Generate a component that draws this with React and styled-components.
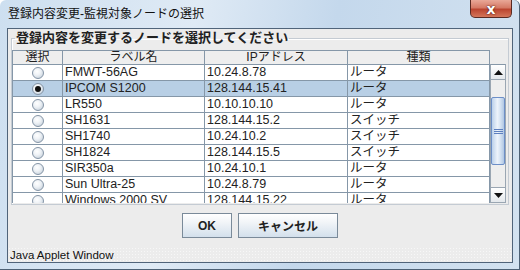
import React from "react";
import styled, { createGlobalStyle } from "styled-components";

const rows = [
  { label: "FMWT-56AG", ip: "10.24.8.78", kind: "ルータ" },
  { label: "IPCOM S1200", ip: "128.144.15.41", kind: "ルータ", selected: true },
  { label: "LR550", ip: "10.10.10.10", kind: "ルータ" },
  { label: "SH1631", ip: "128.144.15.2", kind: "スイッチ" },
  { label: "SH1740", ip: "10.24.10.2", kind: "スイッチ" },
  { label: "SH1824", ip: "128.144.15.5", kind: "スイッチ" },
  { label: "SIR350a", ip: "10.24.10.1", kind: "ルータ" },
  { label: "Sun Ultra-25", ip: "10.24.8.79", kind: "ルータ" },
  { label: "Windows 2000 SV", ip: "128.144.15.22", kind: "ルータ" },
];

const cols = "50px 142px 143px 142px";
const jp = `"Liberation Sans", "Noto Sans CJK JP", sans-serif`;

const Global = createGlobalStyle`
  body {
    margin: 0;
    background: #ffffff;
    font-family: ${jp};
  }
`;

const Window = styled.div`
  width: 520px;
  height: 270px;
  box-sizing: border-box;
  display: flex;
  flex-direction: column;
  padding: 0 6px 6px 7px;
  border-radius: 6px 6px 0 0;
  background: linear-gradient(100deg, #cddff0 0%, #dfeaf5 35%, #c4d8ec 60%, #d3e2f0 100%);
  border: 1px solid #4d6175;
  border-width: 0 1px 1px 0;
`;

const TitleBar = styled.div`
  height: 28px;
  display: flex;
  justify-content: space-between;
  align-items: flex-start;
  flex-shrink: 0;
`;

const Title = styled.div`
  font-size: 12px;
  line-height: 28px;
  color: #111;
  margin-left: 1px;
`;

const CloseButton = styled.div`
  width: 42px;
  height: 18px;
  margin-right: 1px;
  box-sizing: border-box;
  border: 1px solid #5a2a22;
  border-top: none;
  border-radius: 0 0 5px 5px;
  background: linear-gradient(180deg, #e9a898 0%, #d57a66 45%, #bb4530 55%, #d4765a 100%);
  display: flex;
  align-items: center;
  justify-content: center;
  color: #fff;
  font: bold 14px "DejaVu Sans", sans-serif;
  line-height: 14px;
  text-shadow: 0 0 2px #5a1a10, 0 0 1px #5a1a10;
`;

const Panel = styled.div`
  flex: 1;
  display: flex;
  flex-direction: column;
  background: #ececec;
  border: 1px solid #50647a;
`;

const GroupBox = styled.fieldset`
  margin: 1px 3px 0 3px;
  padding: 4px 1px 1px 0;
  border: 1px solid #c4cbd3;
  box-shadow: inset 1px 1px 0 #ffffff;
  min-width: 0;
`;

const Legend = styled.legend`
  font: bold 13px ${jp};
  line-height: 16px;
  padding: 0 1px;
  margin-left: 3px;
  color: #222;
`;

const ScrollPane = styled.div`
  display: flex;
  height: 153px;
`;

const TableArea = styled.div`
  display: flex;
  flex-direction: column;
  border-left: 1px solid #8597a8;
  overflow: hidden;
`;

const HeaderRow = styled.div`
  display: grid;
  grid-template-columns: ${cols};
  height: 15px;
  box-sizing: border-box;
  border-top: 1px solid #8597a8;
  border-bottom: 1px solid #8597a8;
  background: #eeeeee;
`;

const HeaderCell = styled.div`
  font-size: 12px;
  line-height: 13px;
  text-align: center;
  color: #222;
  border-right: 1px solid #8597a8;
`;

const Body = styled.div`
  flex: 1;
  overflow: hidden;
  background: #ffffff;
`;

const Row = styled.div`
  display: grid;
  grid-template-columns: ${cols};
  height: 16px;
  box-sizing: border-box;
  border-bottom: 1px solid #8597a8;
  background: ${(p) => (p.$selected ? "#b8cfe5" : "#ffffff")};
`;

const Cell = styled.div`
  font-size: 12.5px;
  line-height: 15px;
  padding-left: 2px;
  color: #222;
  white-space: nowrap;
  overflow: hidden;
  border-right: 1px solid #8597a8;
`;

const RadioCell = styled(Cell)`
  display: flex;
  align-items: center;
  justify-content: center;
  padding: 0;
`;

const Radio = styled.span`
  width: 12px;
  height: 12px;
  box-sizing: border-box;
  border-radius: 50%;
  border: 1px solid #8494a6;
  background: radial-gradient(circle at 40% 35%, #ffffff 0%, #eef2f6 40%, #bcc8d4 100%);
  display: flex;
  align-items: center;
  justify-content: center;

  &::after {
    content: "";
    width: 6px;
    height: 6px;
    border-radius: 50%;
    background: ${(p) => (p.$checked ? "#111" : "transparent")};
  }
`;

const ScrollColumn = styled.div`
  display: flex;
  flex-direction: column;
  width: 16px;
  padding-top: 14px;
`;

const ScrollBar = styled.div`
  flex: 1;
  display: flex;
  flex-direction: column;
  background: #eeeeee;
  border: 1px solid #9aa6b2;
  border-top-color: #8597a8;
`;

const ArrowButton = styled.div`
  height: 15px;
  flex-shrink: 0;
  box-sizing: border-box;
  display: flex;
  align-items: center;
  justify-content: center;
  background: linear-gradient(180deg, #ffffff, #e4e8ec);
  border-bottom: ${(p) => (p.$down ? "none" : "1px solid #9aa6b2")};
  border-top: ${(p) => (p.$down ? "1px solid #9aa6b2" : "none")};
`;

const Track = styled.div`
  flex: 1;
`;

const Thumb = styled.div`
  margin-top: 17px;
  height: 68px;
  box-sizing: border-box;
  border: 1px solid #6d8fc8;
  border-radius: 2px;
  background: linear-gradient(90deg, #bcd1ea 0%, #edf3fb 45%, #e0eaf6 60%, #b0c7e4 100%);
  display: flex;
  align-items: center;
  justify-content: center;
`;

const ButtonRow = styled.div`
  display: flex;
  justify-content: center;
  gap: 6px;
  padding-top: 8px;
  height: 42px;
  box-sizing: border-box;
`;

const Button = styled.button`
  width: ${(p) => p.$w}px;
  height: 25px;
  padding: 0;
  border: 1px solid #7a8a99;
  background: linear-gradient(180deg, #ffffff 0%, #f2f5f8 35%, #d3e0ec 100%);
  font: bold 12px ${jp};
  color: #222;
`;

const StatusBar = styled.div`
  flex: 1;
  font-size: 11.5px;
  line-height: 14px;
  padding: 1px 2px 0;
  color: #111;
  background-image: radial-gradient(#f7f7f7 0.6px, transparent 0.8px);
  background-size: 3px 3px;
`;

const Arrow = ({ down }) => (
  <svg width="9" height="5" viewBox="0 0 9 5">
    <path d={down ? "M0 0h9L4.5 5z" : "M0 5h9L4.5 0z"} fill="#111" />
  </svg>
);

const Grip = () => (
  <svg width="9" height="5" viewBox="0 0 9 5">
    <path d="M0 0.5h9M0 2.5h9M0 4.5h9" stroke="#5d7fbf" strokeWidth="1" />
  </svg>
);

export default function App() {
  return (
    <>
      <Global />
      <Window>
        <TitleBar>
          <Title>登録内容変更-監視対象ノードの選択</Title>
          <CloseButton>x</CloseButton>
        </TitleBar>
        <Panel>
          <GroupBox>
            <Legend>登録内容を変更するノードを選択してください</Legend>
            <ScrollPane>
              <TableArea>
                <HeaderRow>
                  <HeaderCell>選択</HeaderCell>
                  <HeaderCell>ラベル名</HeaderCell>
                  <HeaderCell>IPアドレス</HeaderCell>
                  <HeaderCell>種類</HeaderCell>
                </HeaderRow>
                <Body>
                  {rows.map((r) => (
                    <Row key={r.label} $selected={r.selected}>
                      <RadioCell>
                        <Radio $checked={r.selected} />
                      </RadioCell>
                      <Cell>{r.label}</Cell>
                      <Cell>{r.ip}</Cell>
                      <Cell>{r.kind}</Cell>
                    </Row>
                  ))}
                </Body>
              </TableArea>
              <ScrollColumn>
                <ScrollBar>
                  <ArrowButton>
                    <Arrow />
                  </ArrowButton>
                  <Track>
                    <Thumb>
                      <Grip />
                    </Thumb>
                  </Track>
                  <ArrowButton $down>
                    <Arrow down />
                  </ArrowButton>
                </ScrollBar>
              </ScrollColumn>
            </ScrollPane>
          </GroupBox>
          <ButtonRow>
            <Button $w={50}>OK</Button>
            <Button $w={100}>キャンセル</Button>
          </ButtonRow>
          <StatusBar>Java Applet Window</StatusBar>
        </Panel>
      </Window>
    </>
  );
}
